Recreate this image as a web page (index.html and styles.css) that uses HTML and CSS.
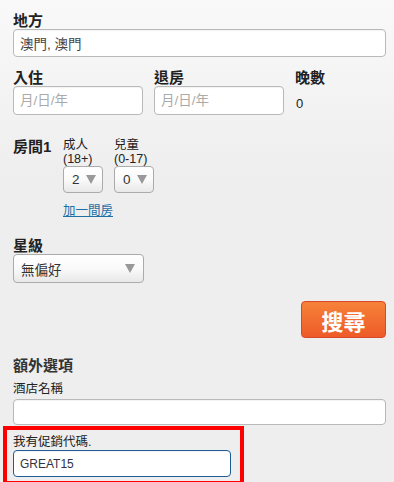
FILE: index.html
```html
<!DOCTYPE html>
<html lang="zh-Hant">
<head>
    <meta charset="UTF-8">
    <title>搜尋酒店</title>
    <link rel="stylesheet" href="styles.css">
</head>
<body>
    <form class="search-form">
        <div class="field">
            <label class="label">地方</label>
            <input type="text" class="text-input wide" value="澳門, 澳門">
        </div>

        <div class="dates">
            <div class="field">
                <label class="label">入住</label>
                <input type="text" class="text-input date" placeholder="月/日/年">
            </div>
            <div class="field">
                <label class="label">退房</label>
                <input type="text" class="text-input date" placeholder="月/日/年">
            </div>
            <div class="field">
                <span class="label">晚數</span>
                <span class="nights">0</span>
            </div>
        </div>

        <div class="room">
            <span class="label room-name">房間1</span>
            <div class="guests">
                <div class="guest">
                    <span class="small-label">成人<br>(18+)</span>
                    <div class="select small"><span>2</span><i class="arrow"></i></div>
                </div>
                <div class="guest">
                    <span class="small-label">兒童<br>(0-17)</span>
                    <div class="select small"><span>0</span><i class="arrow"></i></div>
                </div>
            </div>
        </div>
        <a href="#" class="add-room">加一間房</a>

        <div class="field stars">
            <label class="label">星級</label>
            <div class="select medium"><span>無偏好</span><i class="arrow"></i></div>
        </div>

        <div class="actions">
            <button type="button" class="search-button">搜尋</button>
        </div>

        <h3 class="extra-title">額外選項</h3>
        <div class="field">
            <label class="small-label">酒店名稱</label>
            <input type="text" class="text-input wide short">
        </div>

        <!-- promo code, highlighted -->
        <div class="promo">
            <label class="small-label">我有促銷代碼.</label>
            <input type="text" class="text-input promo-input" value="GREAT15">
        </div>
    </form>
</body>
</html>
```

FILE: styles.css
```css
* {
    margin: 0;
    padding: 0;
    box-sizing: border-box;
}

body {
    font-family: 'Liberation Sans', 'Noto Sans CJK TC', sans-serif;
    background: linear-gradient(#f9f9f9, #eeeeee 180px);
    background-color: #eeeeee;
    color: #222;
    height: 482px;
    overflow: hidden;
}

.search-form {
    padding: 12px 0 0 13px;
}

.label {
    display: block;
    font-size: 15px;
    line-height: 17px;
    font-weight: bold;
    color: #222;
}

.small-label {
    display: block;
    font-size: 12.5px;
    line-height: 14px;
    color: #222;
}

.text-input {
    display: block;
    font-family: 'Liberation Sans', 'Noto Sans CJK TC', sans-serif;
    font-size: 13.5px;
    color: #444;
    background: #fff;
    border: 1px solid #b9b9b9;
    border-radius: 4px;
    padding: 0 6px;
    box-shadow: inset 0 1px 1px rgba(0, 0, 0, 0.05);
    outline: none;
}

.text-input::placeholder {
    color: #aaa;
}

.wide {
    width: 373px;
    height: 28px;
}

.wide.short {
    height: 26px;
    margin-top: 3px;
}

/* dates row */
.dates {
    display: grid;
    grid-template-columns: 130px 130px auto;
    column-gap: 11px;
    margin-top: 12px;
}

.date {
    width: 130px;
    height: 29px;
}

.nights {
    display: block;
    font-size: 13px;
    padding: 10px 0 0 1px;
}

/* rooms */
.room {
    display: flex;
    margin-top: 23px;
}

.room-name {
    width: 50px;
}

.guests {
    display: flex;
    gap: 11px;
}

.guest .small-label {
    width: 40px;
}

.select {
    display: flex;
    align-items: center;
    justify-content: space-between;
    border: 1px solid #ababab;
    border-radius: 4px;
    background: linear-gradient(#ffffff, #fafafa 50%, #e8e8e8);
    font-size: 13.5px;
    color: #333;
}

.select.small {
    width: 40px;
    height: 27px;
    padding: 0 6px 0 8px;
}

.select.medium {
    width: 131px;
    height: 29px;
    padding: 0 8px 0 7px;
}

.arrow {
    width: 0;
    height: 0;
    border-left: 5px solid transparent;
    border-right: 5px solid transparent;
    border-top: 9px solid #999;
}

.add-room {
    display: inline-block;
    margin: 11px 0 0 50px;
    font-size: 12.5px;
    line-height: 14px;
    color: #1d6fa5;
    text-decoration: underline;
}

.stars {
    margin-top: 18px;
}

.actions {
    display: flex;
    justify-content: flex-end;
    width: 373px;
    margin-top: 18px;
}

.search-button {
    width: 85px;
    height: 37px;
    border: 1px solid #d9482a;
    border-radius: 4px;
    background: linear-gradient(#f6823a, #ee5b27);
    color: #fff;
    font-family: 'Noto Sans CJK TC', sans-serif;
    font-size: 22px;
    font-weight: bold;
    cursor: pointer;
}

.extra-title {
    font-size: 15px;
    line-height: 17px;
    font-weight: bold;
    color: #333;
    margin-top: 19px;
    margin-bottom: 8px;
}

/* highlighted promo box */
.promo {
    width: 241px;
    margin: 1px 0 0 -10px;
    border: 4px solid #ff0000;
    border-bottom-width: 5px;
    padding: 5px 9px 4px 6px;
}

.promo .small-label {
    margin-bottom: 1px;
}

.promo-input {
    width: 218px;
    height: 27px;
    border-color: #1e5d96;
    color: #334;
    font-size: 12px;
}
```
